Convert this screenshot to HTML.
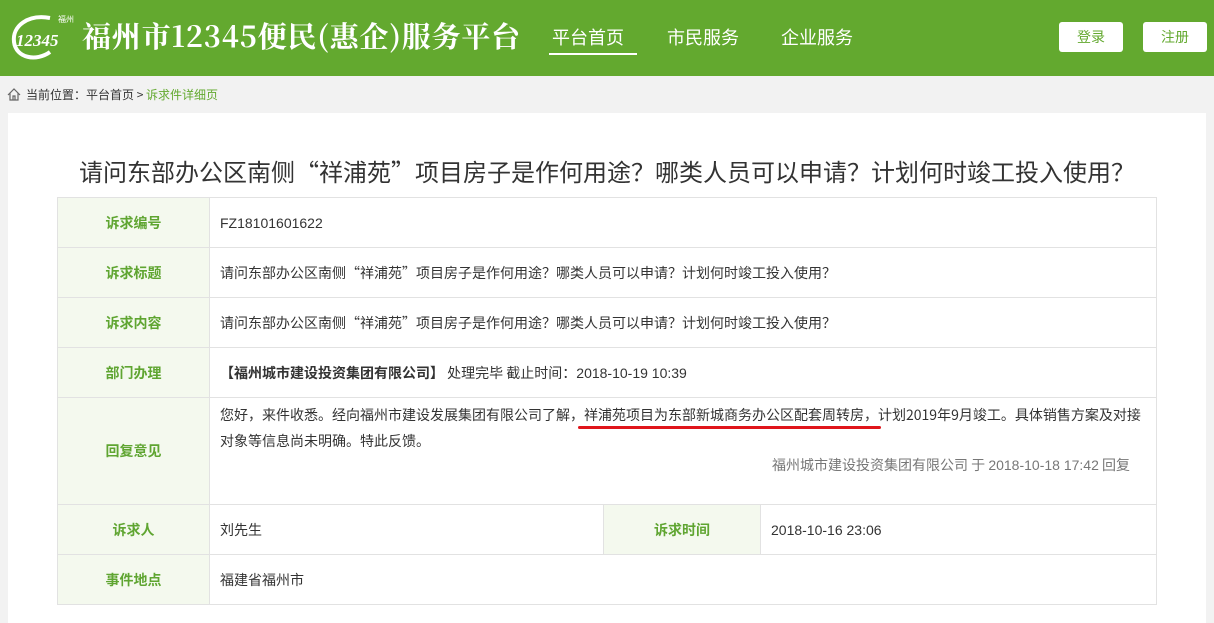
<!DOCTYPE html>
<html><head><meta charset="utf-8"><style>
*{margin:0;padding:0;box-sizing:border-box}
body{width:1214px;height:617px;overflow:hidden;background:#f2f2f2;font-family:"Noto Sans CJK SC","Liberation Sans",sans-serif;position:relative}
.hd{position:absolute;left:0;top:0;width:1214px;height:76px;background:#63a92f}
.abs{position:absolute}
.title{left:82px;top:16px;color:#fff;font-family:"Noto Serif CJK SC","Liberation Serif",serif;font-weight:bold;font-size:29px;white-space:nowrap;letter-spacing:0.8px;line-height:40px}
.nav{top:24px;color:#fff;font-size:18px;line-height:26px}
.btn{top:22px;width:64px;height:30px;background:#fff;border-radius:3px;color:#63a92f;font-size:14px;text-align:center;line-height:30px}
.bc{left:26px;top:87px;font-size:12px;color:#333;line-height:16px}
.card{left:8px;top:113px;width:1198px;height:510px;background:#fff}
.h1{left:0;width:1214px;top:154px;text-align:center;font-size:24px;color:#333;line-height:34px;padding-left:0}
table{position:absolute;left:57px;top:197px;width:1100px;border-collapse:collapse;font-size:14px;color:#333}
td{border:1px solid #e2e2e2;height:50px;padding:0 10px}
td.l{background:#f4f9ee;color:#5fa531;font-weight:bold;text-align:center;width:152px}
.en{font-family:"Liberation Sans",sans-serif;font-size:14px}
</style></head><body>
<div class="hd">
<svg class="abs" style="left:6px;top:10px" width="72" height="56" viewBox="0 0 72 56"><path d="M44 8 C22 4 6 16 8 32 C10 48 30 52 44 42" fill="none" stroke="#fff" stroke-width="4"/><text x="10" y="36" font-size="17" font-style="italic" font-weight="bold" fill="#fff" font-family="Liberation Serif">12345</text><text x="52" y="12" font-size="8" fill="#fff">福州</text></svg>
<div class="abs title">福州市12345便民(惠企)服务平台</div>
<div class="abs nav" style="left:552px">平台首页</div>
<div class="abs" style="left:549px;top:53px;width:88px;height:2px;background:#fff"></div>
<div class="abs nav" style="left:667px">市民服务</div>
<div class="abs nav" style="left:781px">企业服务</div>
<div class="abs btn" style="left:1059px">登录</div>
<div class="abs btn" style="left:1143px">注册</div>
</div>
<svg class="abs" style="left:7px;top:88px" width="14" height="13" viewBox="0 0 14 13"><path d="M1 7 L7 1 L13 7 M3 5 V12 H11 V5 M6 12 V8 H8 V12" fill="none" stroke="#666" stroke-width="1.2"/></svg>
<div class="abs bc">当前位置：平台首页 &gt; <span style="color:#63a92f">诉求件详细页</span></div>
<div class="abs card"></div>
<div class="abs h1">请问东部办公区南侧“祥浦苑”项目房子是作何用途？哪类人员可以申请？计划何时竣工投入使用？</div>
<table>
<tr><td class="l">诉求编号</td><td colspan="3" class="en">FZ18101601622</td></tr>
<tr><td class="l">诉求标题</td><td colspan="3">请问东部办公区南侧“祥浦苑”项目房子是作何用途？哪类人员可以申请？计划何时竣工投入使用？</td></tr>
<tr><td class="l">诉求内容</td><td colspan="3">请问东部办公区南侧“祥浦苑”项目房子是作何用途？哪类人员可以申请？计划何时竣工投入使用？</td></tr>
<tr><td class="l">部门办理</td><td colspan="3"><b>【福州城市建设投资集团有限公司】</b> 处理完毕 截止时间：<span class="en">2018-10-19 10:39</span></td></tr>
<tr><td class="l" style="height:107px">回复意见</td><td colspan="3" style="vertical-align:top;padding-top:4px;line-height:26px;position:relative">您好，来件收悉。经向福州市建设发展集团有限公司了解，祥浦苑项目为东部新城商务办公区配套周转房，计划2019年9月竣工。具体销售方案及对接对象等信息尚未明确。特此反馈。<div style="text-align:right;color:#777;padding-right:16px;margin-top:-2px">福州城市建设投资集团有限公司 于 <span class="en">2018-10-18 17:42</span> 回复</div><div style="position:absolute;left:368px;top:28px;width:303px;height:3px;background:#e0151b;border-radius:2px"></div></td></tr>
<tr><td class="l">诉求人</td><td style="width:394px">刘先生</td><td class="l" style="width:157px">诉求时间</td><td class="en">2018-10-16 23:06</td></tr>
<tr><td class="l">事件地点</td><td colspan="3">福建省福州市</td></tr>
</table>
</body></html>
